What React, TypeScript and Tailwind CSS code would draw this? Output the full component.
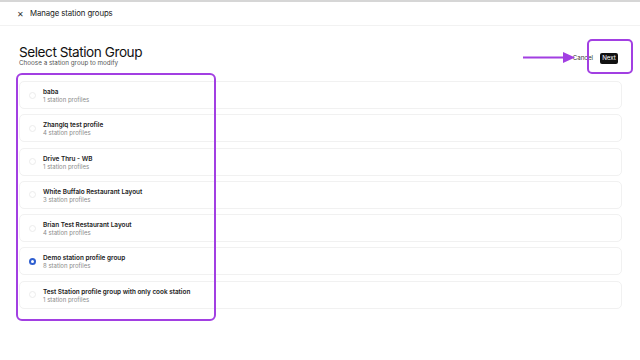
import React from 'react';

interface StationGroup {
  name: string;
  count: number;
}

const groups: StationGroup[] = [
  { name: 'baba', count: 1 },
  { name: 'Zhanglq test profile', count: 4 },
  { name: 'Drive Thru - WB', count: 1 },
  { name: 'White Buffalo Restaurant Layout', count: 3 },
  { name: 'Brian Test Restaurant Layout', count: 4 },
  { name: 'Demo station profile group', count: 8 },
  { name: 'Test Station profile group with only cook station', count: 1 },
];

const selected = 'Demo station profile group';

function Radio({ checked }: { checked: boolean }) {
  if (checked) {
    return (
      <span className="flex h-[7px] w-[7px] shrink-0 items-center justify-center rounded-full bg-[#2f5fd0]">
        <span className="h-[3px] w-[3px] rounded-full bg-white" />
      </span>
    );
  }
  return <span className="h-[7px] w-[7px] shrink-0 rounded-full border border-[#ececec]" />;
}

export default function App() {
  return (
    <div
      className="relative h-[360px] w-[640px] overflow-hidden bg-white text-[#1a1a1a]"
      style={{ fontFamily: 'Inter, "Liberation Sans", sans-serif' }}
    >
      <div className="h-[2px] bg-[#d6d6d6]" />
      <header className="flex h-[24px] items-center gap-[6px] border-b border-[#f2f2f2] pl-[17px]">
        <span className="text-[8px] leading-none text-[#333]">✕</span>
        <span className="text-[7.8px] leading-none tracking-[-0.1px]">Manage station groups</span>
      </header>

      <main className="pl-[19px] pr-[18px]">
        <div className="flex items-start justify-between pr-[4px] pt-[19px]">
          <div>
            <h1 className="text-[13.6px] leading-[15px] tracking-[-0.45px] text-[#111]">Select Station Group</h1>
            <p className="mt-[0px] text-[6.3px] leading-[7px] text-[#555]">Choose a station group to modify</p>
          </div>
          <div className="mt-[8px] flex items-center gap-[7px]">
            <span className="text-[6.2px] leading-none text-[#333]">Cancel</span>
            <button className="h-[11px] w-[18px] rounded-[2px] bg-[#111] text-[6.2px] leading-none text-white">Next</button>
          </div>
        </div>

        <ul className="mt-[14px] flex flex-col gap-[5.3px]">
          {groups.map((g) => (
            <li
              key={g.name}
              className="flex h-[28px] items-center gap-[7px] rounded-[5px] border border-[#f1f1f1] pl-[9px]"
            >
              <Radio checked={g.name === selected} />
              <div className="flex flex-col pt-[2px]">
                <span className="text-[6.4px] font-semibold leading-[8px] text-[#1a1a1a]">{g.name}</span>
                <span className="text-[6px] leading-[8px] text-[#8a8a8a]">{g.count} station profiles</span>
              </div>
            </li>
          ))}
        </ul>
      </main>

      {/* annotation overlay */}
      <div className="absolute left-[16px] top-[73px] h-[248px] w-[200px] rounded-[6px] border-[2.5px] border-[#a23fe2]" />
      <div className="absolute left-[587px] top-[39px] h-[35px] w-[46px] rounded-[5px] border-[2.5px] border-[#a23fe2]" />
      <svg className="absolute left-[522px] top-[51px]" width="54" height="13" viewBox="0 0 54 13">
        <line x1="1" y1="6.5" x2="42" y2="6.5" stroke="#a23fe2" strokeWidth="2.2" />
        <polygon points="41,1 53,6.5 41,12" fill="#a23fe2" />
      </svg>
    </div>
  );
}
